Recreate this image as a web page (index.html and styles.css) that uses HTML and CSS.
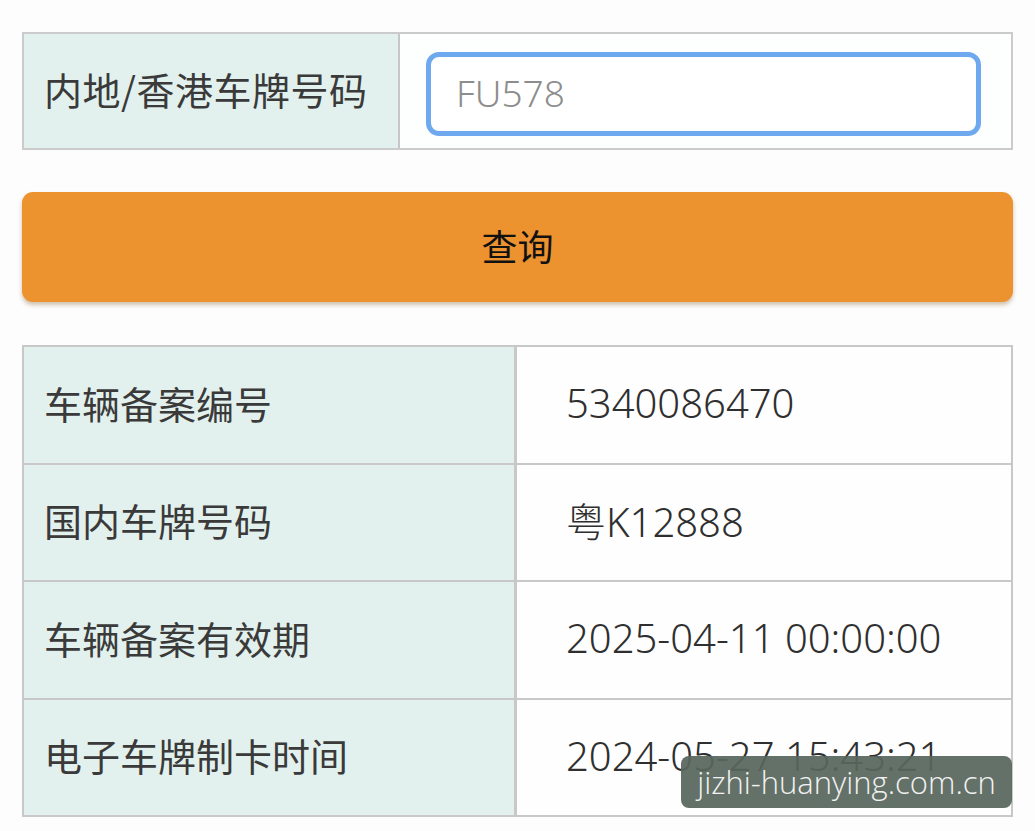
FILE: index.html
```html
<!DOCTYPE html>
<html lang="zh-CN">
<head>
<meta charset="utf-8">
<title>车辆备案查询</title>
<link rel="stylesheet" href="styles.css">
</head>
<body>
<div class="page">
  <div class="search-table">
    <div class="search-label">内地/香港车牌号码</div>
    <div class="search-cell">
      <div class="search-input"><span class="placeholder">FU578</span></div>
    </div>
  </div>

  <button class="query-btn" type="button">查询</button>

  <div class="result-table">
    <div class="row">
      <div class="label">车辆备案编号</div>
      <div class="value">5340086470</div>
    </div>
    <div class="row">
      <div class="label">国内车牌号码</div>
      <div class="value">粤K12888</div>
    </div>
    <div class="row">
      <div class="label">车辆备案有效期</div>
      <div class="value">2025-04-11 00:00:00</div>
    </div>
    <div class="row">
      <div class="label">电子车牌制卡时间</div>
      <div class="value">2024-05-27 15:43:21</div>
    </div>
  </div>

  <div class="watermark">jizhi-huanying.com.cn</div>
</div>
</body>
</html>
```

FILE: styles.css
```css
* { box-sizing: border-box; }

html, body {
  margin: 0;
  padding: 0;
  background: #fdfdfd;
}

body {
  font-family: "Noto Sans", "Noto Sans CJK SC", sans-serif;
  color: #353535;
  width: 1035px;
  height: 831px;
  overflow: hidden;
}

.page {
  position: relative;
  padding: 32px 22px 0 22px;
  height: 831px;
}

.search-table {
  display: grid;
  grid-template-columns: 376px 1fr;
  height: 118px;
  border: 2px solid #cbcbcb;
  background: #fdfefe;
}

.search-label {
  background: #e3f1ee;
  border-right: 2px solid #c6c6c6;
  display: flex;
  align-items: center;
  padding-left: 20px;
  padding-bottom: 5px;
  font-size: 38px;
  letter-spacing: 0.5px;
  font-family: "Noto Sans CJK SC", sans-serif;
  color: #3a3a3a;
}

.search-cell {
  display: flex;
  align-items: stretch;
  padding: 18px 30px 12px 26px;
}

.search-input {
  flex: 1;
  border: 5px solid #6ea9ef;
  border-radius: 13px;
  background: #ffffff;
  display: flex;
  align-items: center;
  padding-left: 25px;
  padding-bottom: 3px;
}

.placeholder {
  font-size: 37px;
  color: #8d8d8d;
  font-weight: 300;
  font-family: "Noto Sans", sans-serif;
}

.query-btn {
  display: block;
  width: 100%;
  height: 110px;
  margin-top: 42px;
  border: none;
  border-radius: 11px;
  background: #ec922f;
  box-shadow: 0 3px 4px rgba(120, 80, 30, 0.35);
  font-family: "Noto Sans CJK SC", sans-serif;
  font-size: 36px;
  color: #111;
  padding: 0 0 4px 0;
}

.result-table {
  margin-top: 43px;
  border: 2px solid #c8c8c8;
  border-bottom: none;
}

.row {
  display: grid;
  grid-template-columns: 493px 1fr;
  height: 117.5px;
  border-bottom: 2px solid #c8c8c8;
}

.label {
  background: #e3f1ee;
  border-right: 3px solid #c8c8c8;
  display: flex;
  align-items: center;
  padding-left: 20px;
  padding-bottom: 5px;
  font-size: 38px;
  font-family: "Noto Sans CJK SC", sans-serif;
  color: #3a3a3a;
}

.value {
  background: #fefefe;
  display: flex;
  align-items: center;
  padding-left: 49px;
  padding-bottom: 4px;
  font-size: 40px;
  font-weight: 300;
  font-family: "Noto Sans", "Noto Sans CJK SC", sans-serif;
  color: #2f2f2f;
}

.watermark {
  position: absolute;
  left: 681px;
  top: 756px;
  width: 331px;
  height: 52px;
  border-radius: 8px;
  background: rgba(88, 102, 92, 0.93);
  color: #f2f2f2;
  font-family: "Open Sans", sans-serif;
  font-weight: 300;
  font-size: 31px;
  display: flex;
  align-items: center;
  justify-content: center;
  line-height: 1;
}
```
